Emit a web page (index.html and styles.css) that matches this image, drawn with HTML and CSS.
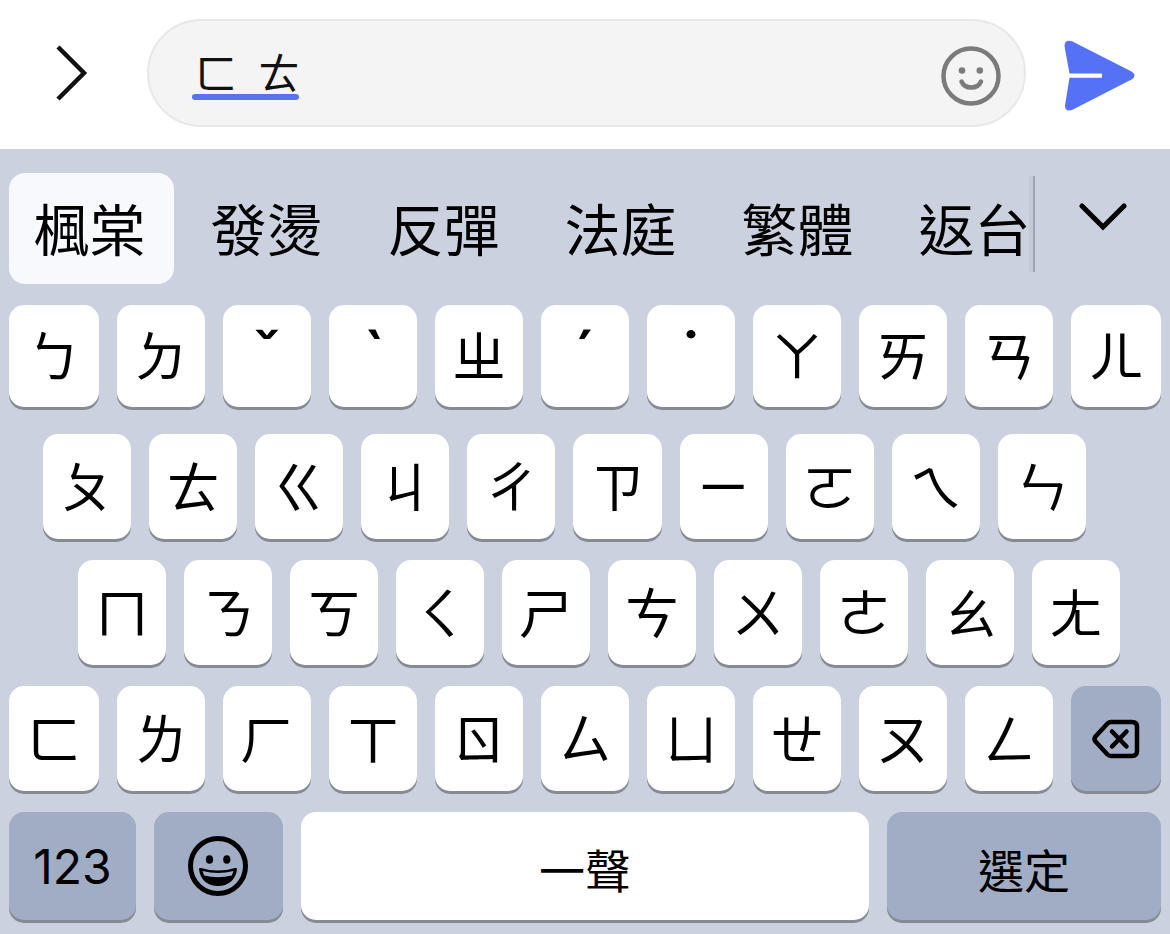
FILE: index.html
```html
<!DOCTYPE html>
<html lang="zh-Hant">
<head>
<meta charset="utf-8">
<meta name="viewport" content="width=device-width, initial-scale=1">
<title>注音鍵盤</title>
<link rel="stylesheet" href="styles.css">
</head>
<body>
<div class="screen">
  <header class="composer">
    <button class="icon-button expand" type="button" aria-label="展開">
      <svg width="32" height="56" viewBox="0 0 32 56" fill="none" stroke="#111" stroke-width="4.500"><path d="M2 2L28 28L2 54"/></svg>
    </button>
    <div class="field">
      <input class="message" type="text" value="ㄈ&ensp;ㄊ" aria-label="訊息">
      <span class="marked"></span>
      <button class="icon-button" type="button" aria-label="貼圖">
        <svg width="60" height="60" viewBox="0 0 60 60" fill="none" stroke="#7b7b7b" stroke-width="4.500" stroke-linecap="round"><circle cx="30" cy="30" r="27.500"/><path d="M20.500 35.500C24 43.500 36.500 43.500 40 35.500"/><g fill="#7b7b7b" stroke="none"><circle cx="21" cy="24.500" r="3.300"/><circle cx="38.800" cy="24.500" r="3.300"/></g></svg>
      </button>
    </div>
    <button class="icon-button send" type="button" aria-label="傳送">
      <svg width="72" height="72" viewBox="0 0 72 72"><path d="M8 1.200L67.500 31.500Q73.500 35.500 67.500 39.500L8 70Q1 72 1 65.500L5.500 37.800H38V33.500H5.500L.500 6Q.500-.500 8 1.200Z" fill="#5571f6"/></svg>
    </button>
  </header>

  <main class="keyboard">
    <div class="suggestions">
      <div class="candidates">
        <button class="candidate selected" type="button">楓棠</button>
        <button class="candidate" type="button">發燙</button>
        <button class="candidate" type="button">反彈</button>
        <button class="candidate" type="button">法庭</button>
        <button class="candidate" type="button">繁體</button>
        <button class="candidate" type="button">返台</button>
      </div>
      <button class="more" type="button" aria-label="更多候選字">
        <svg width="48" height="28" viewBox="0 0 48 28" fill="none" stroke="#000" stroke-width="5" stroke-linecap="round"><path d="M3 3L24 24L45 3"/></svg>
      </button>
    </div>

    <div class="row first">
      <button class="key" type="button">ㄅ</button>
      <button class="key" type="button">ㄉ</button>
      <button class="key tone" type="button">ˇ</button>
      <button class="key tone" type="button">ˋ</button>
      <button class="key" type="button">ㄓ</button>
      <button class="key tone" type="button">ˊ</button>
      <button class="key tone" type="button">˙</button>
      <button class="key" type="button">ㄚ</button>
      <button class="key" type="button">ㄞ</button>
      <button class="key" type="button">ㄢ</button>
      <button class="key" type="button">ㄦ</button>
    </div>
    <div class="row second">
      <button class="key" type="button">ㄆ</button>
      <button class="key" type="button">ㄊ</button>
      <button class="key" type="button">ㄍ</button>
      <button class="key" type="button">ㄐ</button>
      <button class="key" type="button">ㄔ</button>
      <button class="key" type="button">ㄗ</button>
      <button class="key" type="button">ㄧ</button>
      <button class="key" type="button">ㄛ</button>
      <button class="key" type="button">ㄟ</button>
      <button class="key" type="button">ㄣ</button>
    </div>
    <div class="row third">
      <button class="key" type="button">ㄇ</button>
      <button class="key" type="button">ㄋ</button>
      <button class="key" type="button">ㄎ</button>
      <button class="key" type="button">ㄑ</button>
      <button class="key" type="button">ㄕ</button>
      <button class="key" type="button">ㄘ</button>
      <button class="key" type="button">ㄨ</button>
      <button class="key" type="button">ㄜ</button>
      <button class="key" type="button">ㄠ</button>
      <button class="key" type="button">ㄤ</button>
    </div>
    <div class="row fourth">
      <button class="key" type="button">ㄈ</button>
      <button class="key" type="button">ㄌ</button>
      <button class="key" type="button">ㄏ</button>
      <button class="key" type="button">ㄒ</button>
      <button class="key" type="button">ㄖ</button>
      <button class="key" type="button">ㄙ</button>
      <button class="key" type="button">ㄩ</button>
      <button class="key" type="button">ㄝ</button>
      <button class="key" type="button">ㄡ</button>
      <button class="key" type="button">ㄥ</button>
      <button class="key dark" type="button" aria-label="刪除">
        <svg width="48" height="40" viewBox="0 0 48 40" fill="none" stroke="#000" stroke-width="4.500" stroke-linecap="round" stroke-linejoin="round"><path d="M19 3H40Q45 3 45 8V32Q45 37 40 37H19Q17 37 15.500 35.500L3.500 22.500Q1.500 20 3.500 17.500L15.500 4.500Q17 3 19 3Z"/><path d="M20 12.500L34.500 27.500M34.500 12.500L20 27.500"/></svg>
      </button>
    </div>
    <div class="row bottom">
      <button class="key dark digits" type="button">123</button>
      <button class="key dark icon" type="button" aria-label="表情符號">
        <svg width="60" height="60" viewBox="0 0 60 60"><circle cx="30" cy="30" r="27.500" fill="none" stroke="#000" stroke-width="5"/><ellipse cx="21.500" cy="23.500" rx="3.600" ry="4.300"/><ellipse cx="38.800" cy="23.500" rx="3.600" ry="4.300"/><path d="M11 33Q11 31.500 13 32Q30 37 47 32Q49 31.500 49 33C48 44 40 50 30 50S12 44 11 33Z"/><path d="M14.500 35Q30 39 45.500 35L43.800 39.500Q30 43 16.200 39.500Z" fill="#a1adc4"/></svg>
      </button>
      <button class="key word" type="button">一聲</button>
      <button class="key dark word" type="button">選定</button>
    </div>
  </main>
</div>
</body>
</html>
```
FILE: styles.css
```css
* {
  box-sizing: border-box;
}

body {
  margin: 0;
  background: #cbd1de;
  color: #000;
  font-family: "Noto Sans CJK TC", sans-serif;
}

button {
  display: flex;
  align-items: center;
  justify-content: center;
  margin: 0;
  padding: 0;
  border: 0;
  background: none;
  color: inherit;
  font: inherit;
}

svg {
  display: block;
}

.screen {
  display: flex;
  flex-direction: column;
  min-height: 100vh;
}

.composer {
  display: flex;
  align-items: center;
  padding: 19px 34px 22px 56px;
  background: #fff;
}

.icon-button {
  flex: none;
}

.field {
  position: relative;
  display: flex;
  flex: 1;
  align-items: center;
  min-width: 0;
  height: 108px;
  margin: 0 38px 0 59px;
  padding: 6px 23px 0 46px;
  border: 2px solid #e8e8e8;
  border-radius: 54px;
  background: #f4f4f4;
}

.message {
  flex: 1;
  min-width: 0;
  height: 64px;
  padding: 0 0 12px;
  border: 0;
  outline: 0;
  background: none;
  color: #111;
  font: 42px "Noto Sans CJK TC", sans-serif;
}

.marked {
  position: absolute;
  left: 43px;
  top: 73px;
  width: 107px;
  height: 6px;
  border-radius: 3px;
  background: #5874e8;
}

.send {
  padding-top: 6px;
}

.keyboard {
  flex: 1;
  padding: 24px 9px 14px;
}

.suggestions {
  display: flex;
  height: 111px;
  margin-bottom: 21px;
}

.candidates {
  position: relative;
  display: flex;
  flex: 1;
  gap: 12px;
  min-width: 0;
  overflow: hidden;
}

.candidates::after {
  content: "";
  position: absolute;
  right: 0;
  top: 3px;
  width: 6px;
  height: 96px;
  background: linear-gradient(to right, #c2c8d4 4px, #9ea5b3 4px);
}

.candidate {
  flex: none;
  width: 165px;
  padding: 0 4px 4px 0;
  border-radius: 16px;
  font-size: 56px;
  line-height: 64px;
}

.selected {
  background: #f7f9fc;
}

.more {
  width: 126px;
  padding: 0 0 24px 10px;
}

.row {
  display: flex;
  gap: 18px;
  height: 105px;
  margin-bottom: 21px;
}

.first,
.fourth {
  display: grid;
  grid-template-columns: 90fr repeat(9, 88fr) 90fr;
}

.first {
  height: 102px;
  margin-bottom: 27px;
}

.second {
  padding: 0 75px 0 34px;
}

.third {
  padding: 0 41px 0 69px;
}

.key {
  flex: 1;
  min-width: 0;
  padding-bottom: 4px;
  border-radius: 15px;
  background: #fff;
  box-shadow: 0 3px 0 #868a92;
  font-size: 54px;
  line-height: 64px;
}

.tone {
  padding-bottom: 0;
  font-family: Inter, sans-serif;
  font-size: 66px;
  font-weight: 500;
}

.dark {
  padding-bottom: 0;
  background: #a1adc4;
}

.bottom {
  display: grid;
  grid-template-columns: 127fr 129fr 568fr 274fr;
  height: 108px;
  margin-bottom: 0;
}

.digits {
  padding-top: 2px;
  font-family: Inter, sans-serif;
  font-size: 48px;
}

.icon {
  padding-right: 2px;
}

.word {
  padding: 4px 0 0;
  font-size: 46px;
}
```
